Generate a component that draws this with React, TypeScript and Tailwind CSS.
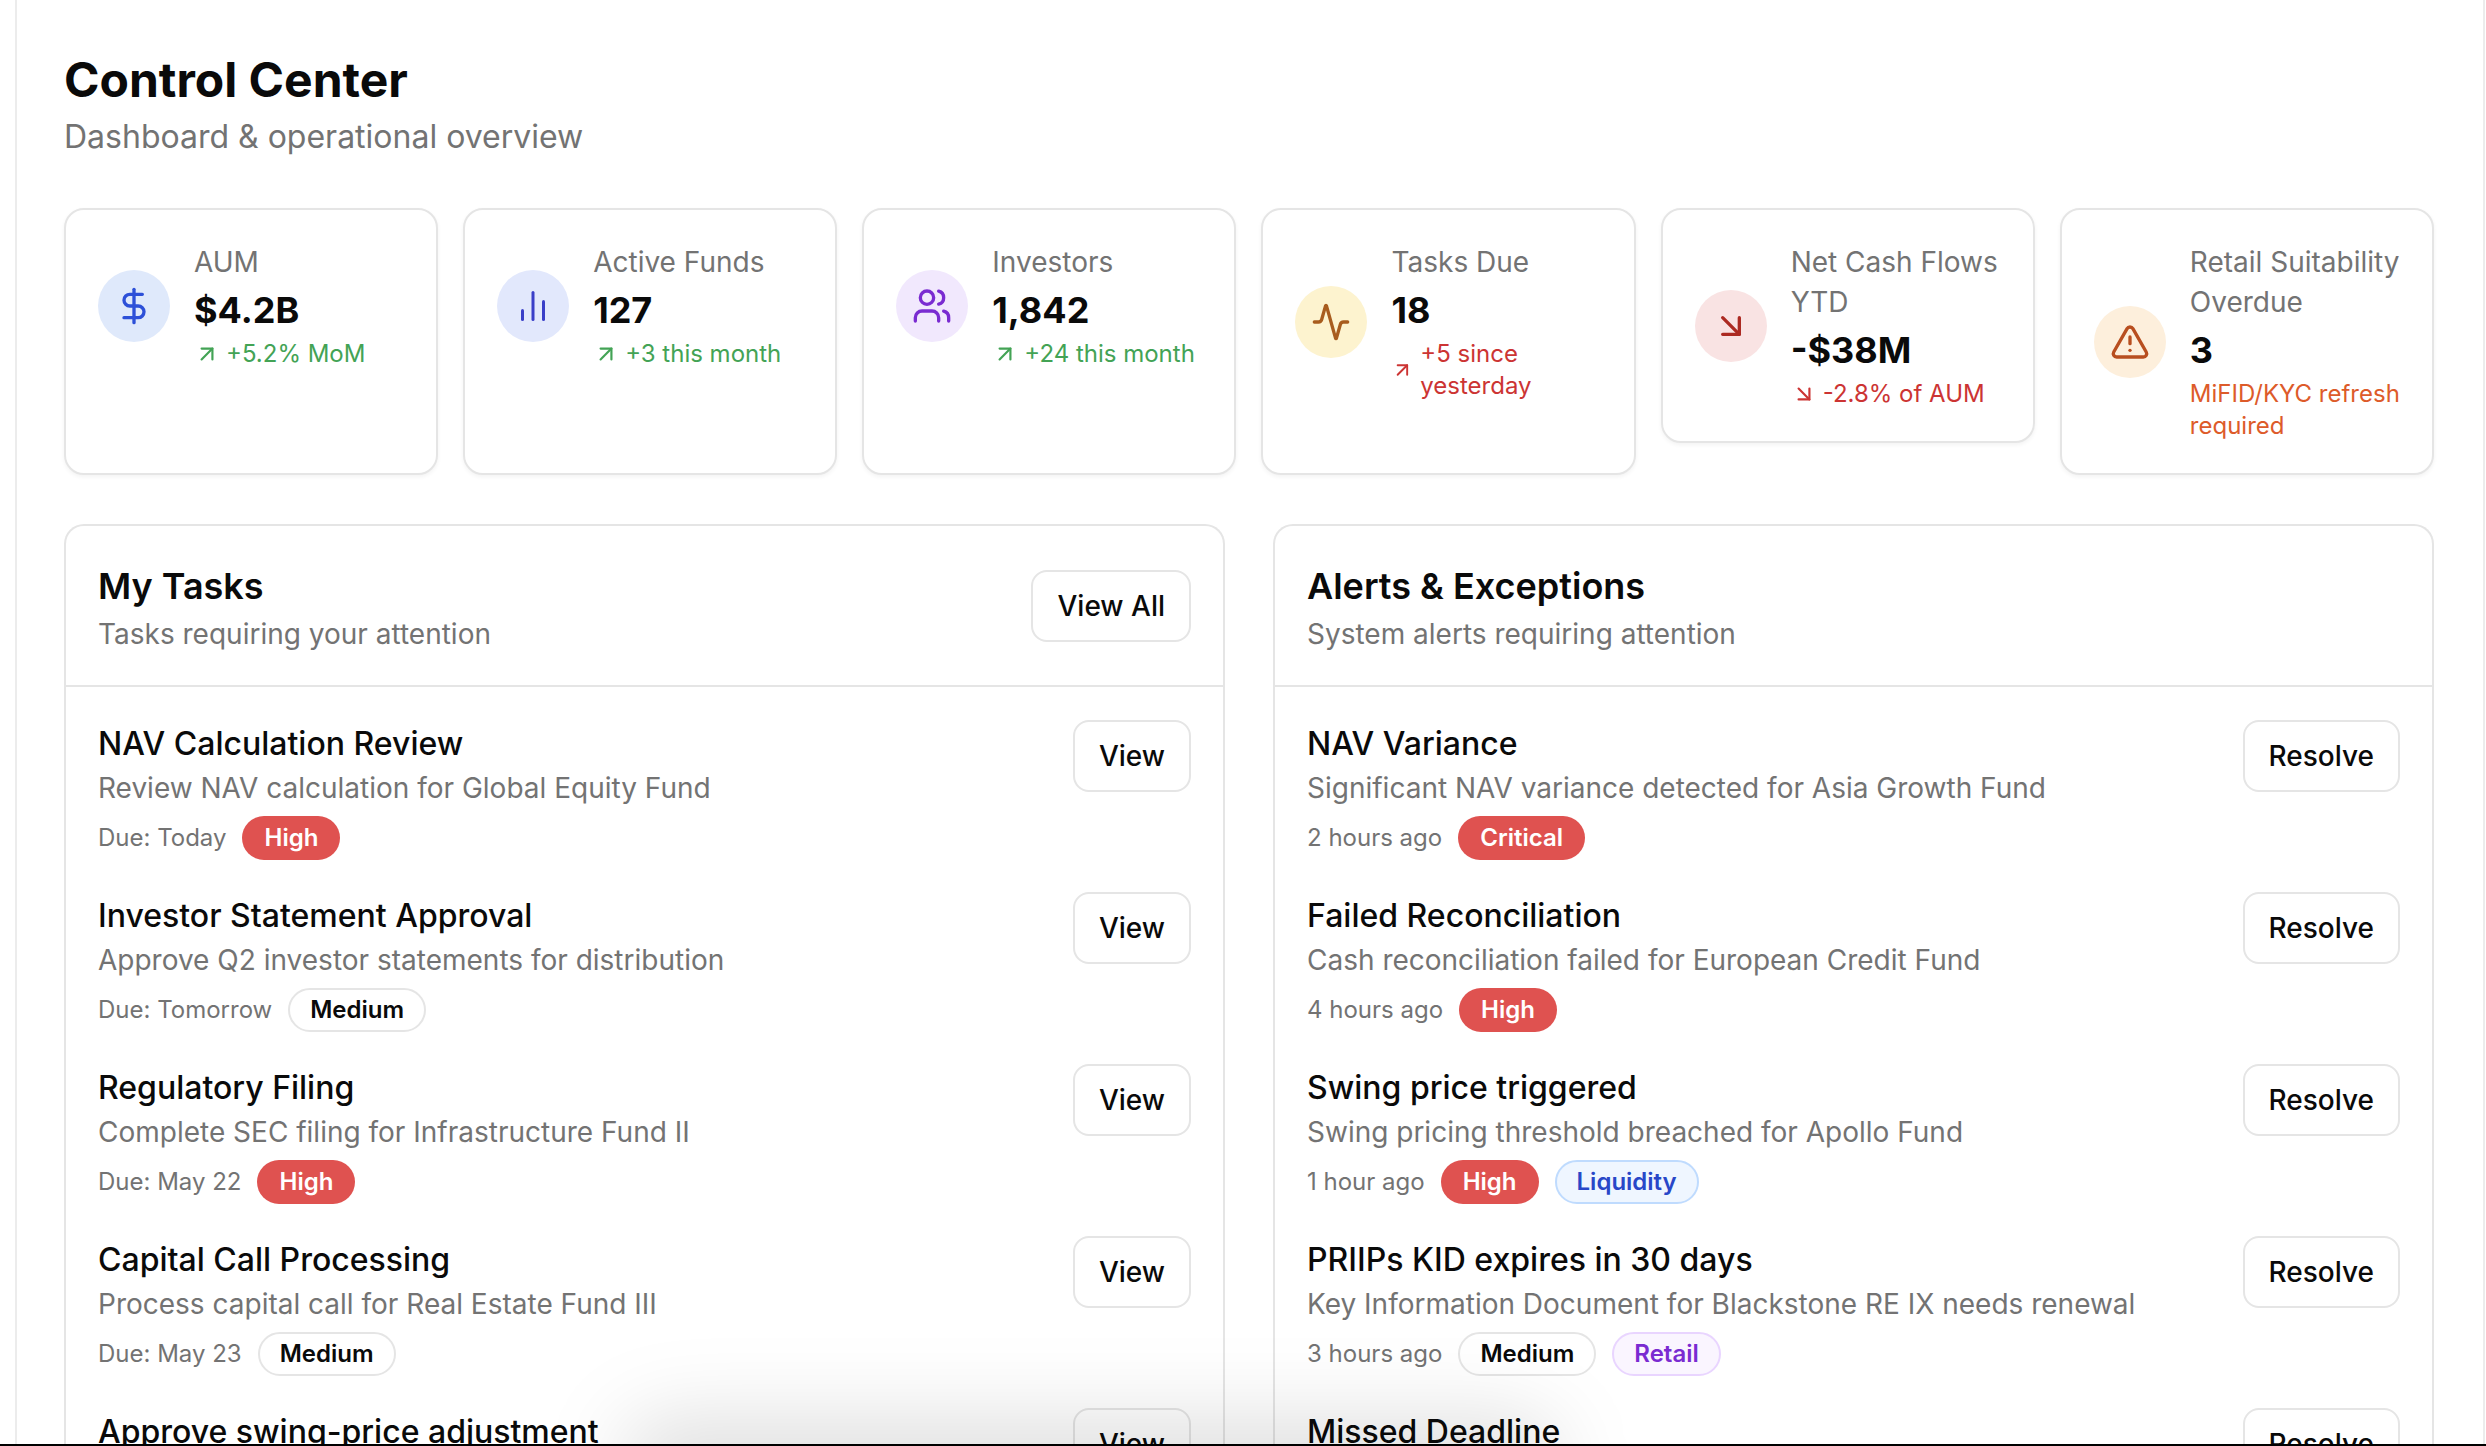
import { Activity, ArrowDownRight, ArrowUpRight, ChartNoAxesColumn, DollarSign, TriangleAlert, Users } from 'lucide-react';
import type { ComponentType } from 'react';

interface Stat {
  label: string;
  value: string;
  note: string;
  noteClass: string;
  Icon: ComponentType<{ className?: string }>;
  iconClass: string;
  iconSize?: string;
  Arrow?: ComponentType<{ className?: string }>;
  alone?: boolean;
}

const stats: Stat[] = [
  { label: 'AUM', value: '$4.2B', note: '+5.2% MoM', noteClass: 'text-[#43a355]', Icon: DollarSign, iconClass: 'bg-[#dfe9fb] text-[#2d50d8]', Arrow: ArrowUpRight },
  { label: 'Active Funds', value: '127', note: '+3 this month', noteClass: 'text-[#43a355]', Icon: ChartNoAxesColumn, iconSize: 'h-[36px] w-[36px]', iconClass: 'bg-[#e2e8fc] text-[#3a3fc8]', Arrow: ArrowUpRight },
  { label: 'Investors', value: '1,842', note: '+24 this month', noteClass: 'text-[#43a355]', Icon: Users, iconClass: 'bg-[#f1e8fd] text-[#7a2bd1]', Arrow: ArrowUpRight },
  { label: 'Tasks Due', value: '18', note: '+5 since yesterday', noteClass: 'text-[#cc3433]', Icon: Activity, iconClass: 'bg-[#fdf3cf] text-[#a85c1e]', Arrow: ArrowUpRight },
  { label: 'Net Cash Flows YTD', value: '-$38M', note: '-2.8% of AUM', noteClass: 'text-[#cc3433]', Icon: ArrowDownRight, iconClass: 'bg-[#f9e3e3] text-[#ac2a22]', Arrow: ArrowDownRight, alone: true },
  { label: 'Retail Suitability Overdue', value: '3', note: 'MiFID/KYC refresh required', noteClass: 'text-[#dd5b2a]', Icon: TriangleAlert, iconClass: 'bg-[#fdefdc] text-[#b84e1f]' },
];

type BadgeKind = 'High' | 'Critical' | 'Medium' | 'Liquidity' | 'Retail';

const badgeClass: Record<BadgeKind, string> = {
  High: 'bg-[#df5250] border-transparent text-white',
  Critical: 'bg-[#df5250] border-transparent text-white',
  Medium: 'bg-white border-[#e5e5e5] text-[#0a0a0a]',
  Liquidity: 'bg-[#eff6ff] border-[#bfdbfe] text-[#2847c8]',
  Retail: 'bg-[#faf5ff] border-[#e9d5ff] text-[#7a2bd1]',
};

interface Row {
  title: string;
  desc: string;
  meta: string;
  badges: BadgeKind[];
}

const tasks: Row[] = [
  { title: 'NAV Calculation Review', desc: 'Review NAV calculation for Global Equity Fund', meta: 'Due: Today', badges: ['High'] },
  { title: 'Investor Statement Approval', desc: 'Approve Q2 investor statements for distribution', meta: 'Due: Tomorrow', badges: ['Medium'] },
  { title: 'Regulatory Filing', desc: 'Complete SEC filing for Infrastructure Fund II', meta: 'Due: May 22', badges: ['High'] },
  { title: 'Capital Call Processing', desc: 'Process capital call for Real Estate Fund III', meta: 'Due: May 23', badges: ['Medium'] },
  { title: 'Approve swing-price adjustment', desc: '', meta: '', badges: [] },
];

const alerts: Row[] = [
  { title: 'NAV Variance', desc: 'Significant NAV variance detected for Asia Growth Fund', meta: '2 hours ago', badges: ['Critical'] },
  { title: 'Failed Reconciliation', desc: 'Cash reconciliation failed for European Credit Fund', meta: '4 hours ago', badges: ['High'] },
  { title: 'Swing price triggered', desc: 'Swing pricing threshold breached for Apollo Fund', meta: '1 hour ago', badges: ['High', 'Liquidity'] },
  { title: 'PRIIPs KID expires in 30 days', desc: 'Key Information Document for Blackstone RE IX needs renewal', meta: '3 hours ago', badges: ['Medium', 'Retail'] },
  { title: 'Missed Deadline', desc: '', meta: '', badges: [] },
];

function StatCard({ stat }: { stat: Stat }) {
  const { Icon, Arrow } = stat;
  return (
    <div className={`rounded-[20px] border-2 border-[#e5e5e5] bg-white pb-[31px] pl-[32px] pr-[24px] pt-[32px] shadow-[0_2px_4px_rgba(0,0,0,0.05)] ${stat.alone ? 'self-start' : ''}`}>
      <div className="flex items-center gap-[24px]">
        <div className={`flex h-[72px] w-[72px] shrink-0 items-center justify-center rounded-full ${stat.iconClass}`}>
          <Icon className={stat.iconSize ?? 'h-[40px] w-[40px]'} />
        </div>
        <div className="min-w-0">
          <div className="text-[28px] leading-[40px] text-[#737373]">{stat.label}</div>
          <div className="text-[36px] font-bold leading-[56px] text-[#0a0a0a]">{stat.value}</div>
          <div className={`flex items-center gap-[6px] text-[24px] leading-[32px] ${stat.noteClass}`}>
            {Arrow && <Arrow className="h-[26px] w-[26px]" />}
            <span>{stat.note}</span>
          </div>
        </div>
      </div>
    </div>
  );
}

function Panel({ title, subtitle, action, rowAction, rows }: { title: string; subtitle: string; action?: string; rowAction: string; rows: Row[] }) {
  return (
    <div className="min-w-0 rounded-t-[20px] border-2 border-b-0 border-[#e5e5e5] bg-white">
      <div className="flex h-[161px] items-start justify-between border-b-2 border-[#e5e5e5] px-[32px] pt-[32px]">
        <div>
          <div className="text-[36px] font-semibold leading-[56px] text-[#0a0a0a]">{title}</div>
          <div className="text-[28px] leading-[40px] text-[#737373]">{subtitle}</div>
        </div>
        {action && <button className="mt-[12px] h-[72px] rounded-[16px] border-2 border-[#e5e5e5] bg-white px-[24px] text-[28px] font-medium text-[#0a0a0a]">{action}</button>}
      </div>
      <div className="flex flex-col gap-[32px] px-[32px] pt-[33px]">
        {rows.map(row => (
          <div key={row.title} className="flex items-start justify-between">
            <div>
              <div className="text-[32px] font-medium leading-[48px] text-[#0a0a0a]">{row.title}</div>
              {row.desc && <div className="text-[28px] leading-[40px] text-[#737373]">{row.desc}</div>}
              {row.meta && (
                <div className="mt-[8px] flex items-center gap-[16px]">
                  <span className="text-[24px] leading-[32px] text-[#737373]">{row.meta}</span>
                  <div className="flex gap-[16px]">
                    {row.badges.map(b => (
                      <span key={b} className={`flex h-[44px] items-center rounded-full border-2 px-[20px] text-[24px] font-semibold ${badgeClass[b]}`}>{b}</span>
                    ))}
                  </div>
                </div>
              )}
            </div>
            <button className="h-[72px] rounded-[16px] border-2 border-[#e5e5e5] bg-white px-[24px] text-[28px] font-medium text-[#0a0a0a]">{rowAction}</button>
          </div>
        ))}
      </div>
    </div>
  );
}

export default function App() {
  return (
    <div className="relative flex h-[1446px] w-[2486px] flex-col overflow-hidden bg-white font-['Inter',sans-serif]">
      <main className="ml-[15px] mr-[1px] min-h-0 flex-1 overflow-hidden border-x-2 border-[#ececec] pl-[47px] pr-[49px] pt-[48px]">
        <h1 className="text-[48px] font-bold leading-[64px] text-[#0a0a0a]">Control Center</h1>
        <p className="mt-[5px] text-[32px] leading-[40px] text-[#737373]">Dashboard &amp; operational overview</p>
        <div className="mt-[51px] grid grid-cols-6 gap-[25px]">
          {stats.map(s => <StatCard key={s.label} stat={s} />)}
        </div>
        <div className="mt-[49px] grid grid-cols-2 gap-[48px]">
          <Panel title="My Tasks" subtitle="Tasks requiring your attention" action="View All" rowAction="View" rows={tasks} />
          <Panel title="Alerts & Exceptions" subtitle="System alerts requiring attention" rowAction="Resolve" rows={alerts} />
        </div>
      </main>
      <div className="absolute bottom-[-70px] left-[620px] h-[100px] w-[940px] rounded-full bg-black/[0.12] blur-[40px]" />
      <div className="relative h-[2px] bg-black" />
    </div>
  );
}
